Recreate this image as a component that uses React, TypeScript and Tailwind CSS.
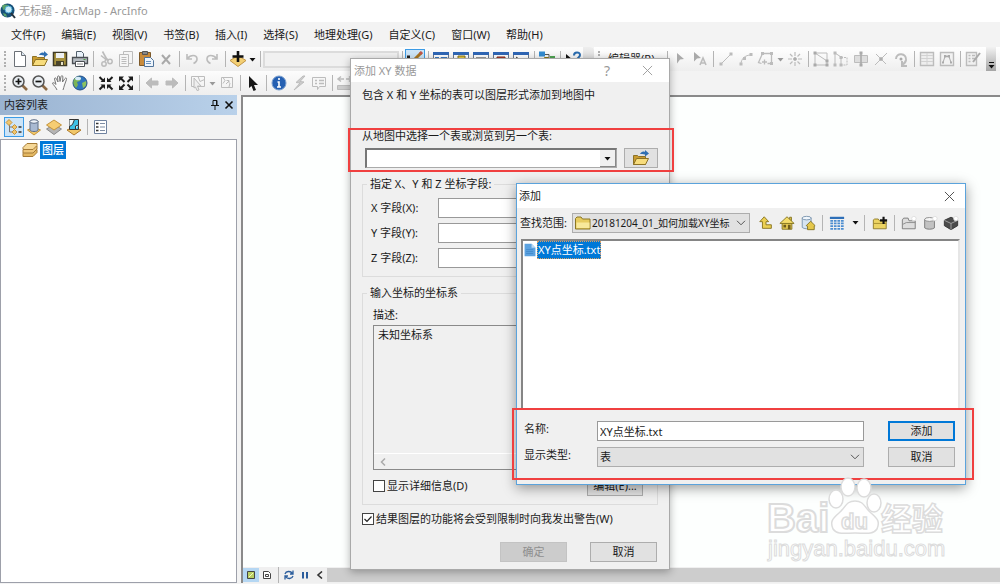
import clsx from 'clsx'
import type { ReactNode } from 'react'

const menus = [
  '文件(F)',
  '编辑(E)',
  '视图(V)',
  '书签(B)',
  '插入(I)',
  '选择(S)',
  '地理处理(G)',
  '自定义(C)',
  '窗口(W)',
  '帮助(H)',
]

function Svg({ children, gray }: { children: ReactNode; gray?: boolean }) {
  return (
    <svg
      viewBox="0 0 18 18"
      className={clsx('size-[18px] shrink-0', gray && 'text-[#bcbcbc]')}
      fill="none"
      stroke="currentColor"
      aria-hidden="true"
    >
      {children}
    </svg>
  )
}

/* Standard toolbar icons */
const NewDoc = () => (
  <Svg>
    <path d="M3.5 1.5h7l4 4v11h-11z" fill="#fff" stroke="#6b7076" />
    <path d="M10.500 1.500v4h4" fill="#dbe6f0" stroke="#6b7076" />
  </Svg>
)
const OpenFolder = () => (
  <Svg>
    <path d="M1.500 15.500v-9h4l1 1h7v8z" fill="#c99b2f" stroke="#8d7226" />
    <path d="M1.500 15.500l3-6h12l-3 6z" fill="#f7dc7c" stroke="#8d7226" />
    <path d="M8 5c1-2 3-3 5-2V1l4 3.500-4 3V5.500C11 5 9.500 5 8 5z" fill="#2f6fb2" stroke="none" />
  </Svg>
)
const Save = () => (
  <Svg>
    <path d="M2.500 2.500h13v13h-13z" fill="#a8923e" stroke="#3e3a26" strokeWidth="1.500" />
    <path d="M5 3h8v5H5z" fill="#eef1f3" stroke="none" />
    <path d="M5 11h8v4.500H5z" fill="#4a452c" stroke="none" />
    <path d="M10 12h2v3h-2z" fill="#e8e3c8" stroke="none" />
  </Svg>
)
const Print = () => (
  <Svg>
    <path d="M5.500 8V1.500h5l2 2V8" fill="#eaf2fa" stroke="#52606c" />
    <path d="M1.500 7.500h15v6h-15z" fill="#b6bcc2" stroke="#4b4f54" strokeWidth="1.300" />
    <path d="M4.500 11.500h9v5h-9z" fill="#fff" stroke="#4b4f54" />
    <path d="M6 14h6" stroke="#888" />
    <path d="M12.500 9.500h2" stroke="#4a9e43" />
  </Svg>
)
const Cut = () => (
  <Svg gray>
    <path d="M5.500 1.500l5 9M9 9.500l-5-4" strokeWidth="1.600" />
    <circle cx="7" cy="14" r="2.200" strokeWidth="1.500" />
    <circle cx="13" cy="11.500" r="2.200" strokeWidth="1.500" />
    <path d="M8 11.500l1-3 2.500 1.500" strokeWidth="1.500" />
  </Svg>
)
const Copy = () => (
  <Svg gray>
    <path d="M6.500 1.500h9v12h-9z" fill="#f5f5f5" />
    <path d="M2.500 4.500h9v12h-9z" fill="#f5f5f5" />
    <path d="M4.500 7.500h5M4.500 9.500h5M4.500 11.500h5M4.500 13.500h5" />
  </Svg>
)
const Paste = () => (
  <Svg>
    <path d="M2.500 2.500h11v13h-11z" fill="#c98b3b" stroke="#7d5a2a" />
    <path d="M5.500 1.500h5v3h-5z" fill="#888" stroke="#555" />
    <path d="M7.500 7.500h6l3 3v6h-9z" fill="#eef5fc" stroke="#52749b" />
    <path d="M9 11.500h5M9 13.500h5" stroke="#6b92bd" />
  </Svg>
)
const Delete = () => (
  <Svg>
    <path d="M5 5l8 9M13 5l-8 9" stroke="#a9a9a9" strokeWidth="2" />
  </Svg>
)
const Undo = () => (
  <Svg gray>
    <path d="M4 4v5h5M4.500 8.500c3-4 9-4 9.500 0 .2 2-1.500 4-3.500 5" strokeWidth="1.600" />
  </Svg>
)
const Redo = () => (
  <Svg gray>
    <path d="M14 4v5H9M13.500 8.500c-3-4-9-4-9.500 0-.2 2 1.500 4 3.500 5" strokeWidth="1.600" />
  </Svg>
)
const AddData = () => (
  <Svg>
    <path d="M1 10.500l8-5 8 5-8 6z" fill="#f3cf74" stroke="#c19445" />
    <path d="M9 1v11M3.500 6.500h11" stroke="#111" strokeWidth="2.600" />
  </Svg>
)
const EditPencil = () => (
  <Svg>
    <path d="M1 5.500h3v3H1z" fill="#222" stroke="none" />
    <path d="M4 8c2 4 5 3 6 1" stroke="#2c5d9c" />
    <path d="M8.500 9.500l7-7" stroke="#a87521" strokeWidth="3" />
    <path d="M14 4l2-2" stroke="#c0554b" strokeWidth="3" />
  </Svg>
)
const WindowIcon = ({ children }: { children?: ReactNode }) => (
  <Svg>
    <path d="M1.500 2.500h15v13h-15z" fill="#fff" stroke="#6c7a8e" />
    <path d="M1 2h16v3H1z" fill="#2f66b5" stroke="none" />
    {children}
  </Svg>
)
const ModelBuilder = () => (
  <Svg>
    <path d="M4 4.500h7v7" stroke="#555" />
    <path d="M1 1.500h6v5H1z" fill="#338bd0" stroke="none" />
    <path d="M6.500 7.500h4v4h-4z" fill="#dfc132" stroke="#8a7515" />
    <path d="M12 6h5v6h-5z" fill="#4ea351" stroke="none" />
  </Svg>
)
const WhatsThis = () => (
  <Svg>
    <path d="M2 4l7 6H5.500L2 13z" fill="#111" stroke="none" />
    <path d="M10 5.500c0-4 6-4 6-.5 0 2.500-3 2.500-3 5M13 12v2" stroke="#2b6cae" strokeWidth="2" />
  </Svg>
)

/* Tools toolbar icons */
const Zoom = ({ plus }: { plus?: boolean }) => (
  <Svg>
    <path d="M11.500 11.500l4.500 4.500" stroke="#8c6a45" strokeWidth="2.600" />
    <circle cx="7.500" cy="7.500" r="5.500" fill="#e9eef2" stroke="#545454" strokeWidth="1.500" />
    <path d={plus ? 'M4.500 7.500h6M7.500 4.500v6' : 'M4.500 7.500h6'} stroke="#111" strokeWidth="1.700" />
  </Svg>
)
const Pan = () => (
  <Svg>
    <path
      d="M6 16c-1-3-4-5-4.500-7 1-1 2.500.5 3.500 1.500L3.500 5c0-1.500 1.500-1.500 2 0L7 8 6.500 3c.2-1.500 1.800-1.500 2 0L9 7.500l1-5c.4-1.300 2-1 1.900.5L11.500 8 14 4.500c.8-1.200 2-.3 1.500 1L13.500 11c-.5 2-1 3-1.500 5"
      fill="#fbfbfb"
      stroke="#777"
    />
  </Svg>
)
const Globe = () => (
  <Svg>
    <circle cx="9" cy="9" r="7" fill="#2f74bd" stroke="#244f83" />
    <path d="M4 4c3-2 5-1 6 0l-1 3-3 1 1 3-2 3c-3-3-3.500-7-1-10z" fill="#7cb454" stroke="none" />
    <path d="M11 9l4-2c1 4-1 6-3 7z" fill="#8cc361" stroke="none" />
    <ellipse cx="7" cy="4.500" rx="3" ry="1.800" fill="#d7ecfa" stroke="none" />
  </Svg>
)
const FixedZoomIn = () => (
  <Svg>
    <path d="M2.500 3l4 4M15.500 3l-4 4M2.500 15.500l4-4M15.500 15.500l-4-4" stroke="#1c1c1c" strokeWidth="2" />
    <path
      d="M8 8H3.500L8 3.500zM10 8h4.500L10 3.500zM8 10.500H3.500L8 15zM10 10.500h4.500L10 15z"
      fill="#1c1c1c"
      stroke="none"
    />
  </Svg>
)
const FixedZoomOut = () => (
  <Svg>
    <path d="M3.500 4l4 4M14.500 4l-4 4M3.500 14.500l4-4M14.500 14.500l-4-4" stroke="#1c1c1c" strokeWidth="2" />
    <path
      d="M2 2.500h5l-5 5zM16 2.500h-5l5 5zM2 16h5l-5-5zM16 16h-5l5-5z"
      fill="#1c1c1c"
      stroke="none"
    />
  </Svg>
)
const Arrow = ({ right }: { right?: boolean }) => (
  <Svg gray>
    <path
      d={right ? 'M15 9l-5.500-5V7H3v4h6.500v3z' : 'M3 9l5.500-5V7H15v4H8.500v3z'}
      fill="currentColor"
    />
  </Svg>
)
const SelectFeatures = () => (
  <Svg gray>
    <path d="M2.500 2.500h13v10h-13zM9 2.500l2 5 4.500-2" />
    <path d="M5 4l7 8H8.500l1.500 4-2 .5L6.500 13 5 14z" fill="#efefef" />
  </Svg>
)
const ClearSelection = () => (
  <Svg gray>
    <path d="M3.500 3.500h11v10h-11zM5 3.500l2 3-2 3M8 10l3-3M8.500 6.500H11V9M11 13l1-4" />
  </Svg>
)
const Pointer = () => (
  <Svg>
    <path d="M5 2l9 9h-4l2 5-2.500 1-2-5L5 14z" fill="#161616" stroke="none" />
  </Svg>
)
const Identify = () => (
  <Svg>
    <circle cx="9" cy="9" r="7" fill="#2560b2" stroke="#7b9fce" />
    <path d="M9 4v2M7.500 8H9v5M7 13h4" stroke="#fff" strokeWidth="1.600" />
  </Svg>
)
const Hyperlink = () => (
  <Svg gray>
    <path d="M13 2L6 8.500l4 .5-6 7 10-8-4-.500 5-5.500z" fill="#ccc" />
  </Svg>
)
const Popup = () => (
  <Svg gray>
    <path d="M2.500 3.500h13v9h-6l-2 3v-3h-5z" fill="#f6f6f6" />
    <path d="M5 6.500h2M9 6.500h5M5 9.500h2M9 9.500h5" strokeWidth="1.400" />
  </Svg>
)
const Measure = () => (
  <Svg gray>
    <path d="M2 5h6M5 2.500L2 5l3 2.500M16 5h-6M13 2.500L16 5l-3 2.500" strokeWidth="1.500" />
    <path d="M1.500 11.500h15v4h-15z" fill="#ccc" />
  </Svg>
)

/* Editor toolbar icons */
const EditArrow = ({ letter }: { letter?: boolean }) => (
  <Svg gray>
    <path d={letter ? 'M3 2l7 6-4 .5-3 3z' : 'M6 3l7 6-4 .5-3 4z'} fill="#aaa" stroke="none" />
    {letter && <path d="M9 15l3-7 3 7M10 13h4" strokeWidth="1.600" />}
  </Svg>
)
const Segment = () => (
  <Svg gray>
    <path d="M4 14L14 4" />
    <path d="M2.500 12.500h3v3h-3zM12.500 2.500h3v3h-3z" fill="currentColor" stroke="none" />
  </Svg>
)
const ArcSegment = () => (
  <Svg gray>
    <path d="M4 14c0-5 4-9 10-9" />
    <path d="M2.500 12.500h3v3h-3zM12.500 3h3v3h-3zM6 7h3v3H6z" fill="currentColor" stroke="none" />
  </Svg>
)
const Trace = () => (
  <Svg gray>
    <path d="M5.500 3.500h9v10h-4M5.500 3.500l-4 9 3 1M5 12h5M7.500 9.500v5" strokeWidth="1.300" />
    <path d="M4 2h3v3H4zM13 2h3v3h-3zM13 12h3v3h-3z" fill="currentColor" stroke="none" />
  </Svg>
)
const PointTool = () => (
  <Svg gray>
    <path d="M9 2v4M9 12v4M2 9h4M12 9h4M4 4l2.500 2.500M14 4l-2.500 2.500M4 14l2.500-2.500M14 14l-2.500-2.500" strokeWidth="1.200" />
    <circle cx="9" cy="9" r="1.500" fill="#aaa" />
  </Svg>
)
const EditVertices = () => (
  <Svg gray>
    <path d="M3 3v12h12v-4L3 3h12v8" />
    <path d="M1.500 1.500h3v3h-3zM1.500 13.500h3v3h-3zM13.500 13.500h3v3h-3zM13.500 9.500h3v3h-3z" fill="#aaa" stroke="none" />
  </Svg>
)
const Reshape = () => (
  <Svg gray>
    <path d="M3 15V3l6 4v8" />
    <path d="M9 7.500h6V15H9" strokeDasharray="2 1" />
    <path d="M1.500 1.500h3v3h-3zM1.500 13.500h3v3h-3zM7.500 6h3v3h-3zM7.500 13.500h3v3h-3z" fill="#bbb" stroke="none" />
  </Svg>
)
const CutPolygon = () => (
  <Svg gray>
    <path d="M2.500 5.500h13v7h-13z" fill="#ddd" />
    <path d="M9 3v12" stroke="#aaa" strokeWidth="1.600" />
    <path d="M7.500 1.500h3v3h-3zM7.500 13.500h3v3h-3z" fill="#aaa" stroke="none" />
  </Svg>
)
const SplitTool = () => (
  <Svg gray>
    <path d="M3 15L15 3M4 4l10 10" />
    <circle cx="9" cy="9" r="1.500" fill="#aaa" />
  </Svg>
)
const RotateTool = () => (
  <Svg gray>
    <path d="M4 9c0-7 11-6 10 1-.5 3-2.500 4-4 4.500M10 11v5h5" strokeWidth="2" />
    <circle cx="9" cy="9" r="1.500" fill="#aaa" stroke="none" />
  </Svg>
)
const Attributes = () => (
  <Svg gray>
    <path d="M2.500 2.500h13v13h-13z" fill="#eee" strokeWidth="1.400" />
    <path d="M3 5.500h12M3 8.500h12M3 11.500h12M9 3v12" stroke="#d2d2d2" />
  </Svg>
)
const SketchProps = () => (
  <Svg gray>
    <path d="M2.500 2.500h13v13h-13z" fill="#f2f2f2" strokeWidth="1.400" />
    <path d="M5 12.500l2-6h4l2 6" stroke="#aaa" />
    <path d="M6 5h2.500v2.500H6zM9.500 5H12v2.500H9.500zM4 11.500h2v2H4zM12 11.500h2v2h-2z" fill="#aaa" stroke="none" />
  </Svg>
)
const CreateFeatures = () => (
  <Svg gray>
    <path d="M2.500 2.500h10v13h-10z" fill="#f0f0f0" strokeWidth="1.400" />
    <path d="M4.500 5.500h2M4.500 8.500h2M4.500 11.500h2M8 5.500h3M8 8.500h3" strokeWidth="1.500" />
    <path d="M9 12l7-9" stroke="#aaa" strokeWidth="2" />
  </Svg>
)

/* Table of contents icons */
const ByDrawingOrder = () => (
  <Svg>
    <path d="M4.500 6v8h5M4.500 9h5" stroke="#777" />
    <path d="M1 4.500l3-3 3 3-3 3zM7 9l2.500-2.500L12 9l-2.500 2.500zM7 14l2.500-2.500L12 14l-2.500 2.500z" fill="#efc66e" stroke="#c5943c" />
    <path d="M13.500 9h3M13.500 14h3" stroke="#333" strokeWidth="1.600" />
  </Svg>
)
const BySource = () => (
  <Svg>
    <path d="M2.500 12l6.500-3 6.500 3-6.500 5z" fill="#f1c769" stroke="#c5943c" />
    <path d="M5 3v9c0 2 8 2 8 0V3z" fill="#a9b9d2" stroke="#5e6e88" />
    <ellipse cx="9" cy="3.500" rx="4" ry="1.800" fill="#f0f4fa" stroke="#5e6e88" />
  </Svg>
)
const ByVisibility = () => (
  <Svg>
    <path d="M1.500 11L9 6.500l7.500 4.500L9 16.500z" fill="#b5b5b5" stroke="#8a8a8a" />
    <path d="M1.500 7L9 2l7.500 5L9 12z" fill="#f6cd73" stroke="#c5943c" />
  </Svg>
)
const BySelection = () => (
  <Svg>
    <path d="M2 12l7-3 7 3-7 5z" fill="#f1c769" stroke="#b07b2a" />
    <path d="M4.500 1.500h9v10h-9z" fill="#3dc1e6" stroke="#333" />
    <path d="M4.500 1.500h5l-2 5-3 2M13.500 7l-3 1v3.500" fill="#eaf8fc" stroke="#333" />
  </Svg>
)
const ListOptions = () => (
  <Svg>
    <path d="M3.500 2.500h12v13h-12z" fill="#fff" stroke="#7083a0" />
    <path d="M5 5.500h2.500M5 9h2.500M5 12.500h2.500" stroke="#333" strokeWidth="1.500" />
    <path d="M9 5.500h5M9 9h5M9 12.500h5" stroke="#7d8ca3" />
  </Svg>
)
const Layers = () => (
  <Svg>
    <path d="M2 15.500v-3l4-4h10v3l-4 4z" fill="#e4b862" stroke="#a57b36" />
    <path d="M2 12v-3l4-4h10v3l-4 4z" fill="#eec77c" stroke="#a57b36" />
    <path d="M2 8.500v-2l4-4h10v2l-4 4z" fill="#f6d897" stroke="#a57b36" />
  </Svg>
)

/* File browser icons */
const UpLevel = () => (
  <Svg>
    <path d="M7 2L2 7.500h3V15h10v-4H9V7.500h3z" fill="#ecd053" stroke="#84701a" />
  </Svg>
)
const Home = () => (
  <Svg>
    <path d="M12 2.500h2v4h-2zM3.500 9h11v7h-11z" fill="#e7cb52" stroke="#80701f" />
    <path d="M1 9.500l8-7.500 8 7.500z" fill="#f4dc69" stroke="#80701f" />
    <path d="M5 11h3v3H5zM10 11h3v5h-3z" fill="#6d5a1a" stroke="none" />
  </Svg>
)
const DefaultGdb = () => (
  <Svg>
    <path d="M2.500 3v11c2 2 8 2 10 0V3z" fill="#d6e4f1" stroke="#7791ab" />
    <ellipse cx="7.500" cy="3.500" rx="5" ry="2" fill="#f1f7fd" stroke="#7791ab" />
    <path d="M7 12l5-5 5 5-1 .5v4H8.500v-4z" fill="#e5c74b" stroke="#80701f" />
  </Svg>
)
const DetailsGrid = () => (
  <Svg>
    <path d="M1 2h16v2.500H1z" fill="#2e6fb8" stroke="none" />
    <path d="M1.500 6.500h15M1.500 9.500h15M1.500 12.500h15M1.500 15.500h15" stroke="#4c8dd0" strokeWidth="2" strokeDasharray="3 1" />
  </Svg>
)
const ConnectFolder = () => (
  <Svg>
    <path d="M1.500 15.500v-10l1.500-1h4l1.500 2H16v9z" fill="#ecd462" stroke="#8a7625" />
    <path d="M2 9.500h14" stroke="#a38b2c" />
    <path d="M13 2v8M9 6h8" stroke="#111" strokeWidth="2.400" />
  </Svg>
)
const NewFolder = () => (
  <Svg>
    <path d="M1.500 15.500v-10l1.500-2h5l1 3h7v9z" fill="#ddd" stroke="#777" />
    <path d="M2 10.500l4-2h10" stroke="#888" />
    <circle cx="14.500" cy="4" r="2.500" fill="#fff" stroke="#ddd" />
  </Svg>
)
const NewGdb = () => (
  <Svg>
    <path d="M3 5v9.500c2 2 9 2 11 0V5z" fill="#c2c2c2" stroke="#777" />
    <ellipse cx="8.500" cy="5" rx="5.500" ry="2.200" fill="#f5f5f5" stroke="#888" />
    <circle cx="14.500" cy="4" r="2.500" fill="#fff" stroke="#ddd" />
  </Svg>
)
const NewToolbox = () => (
  <Svg>
    <path d="M1.500 6L9 2.500 16.500 6v6L9 16.500 1.500 12z" fill="#4b4b4b" stroke="#333" />
    <path d="M1.500 6L9 9.500 16.500 6M9 9.500v7" stroke="#aaa" />
    <circle cx="14.500" cy="4" r="2.500" fill="#fff" stroke="#ddd" />
  </Svg>
)
const FolderIcon = () => (
  <Svg>
    <path d="M1.500 15V4.500L3 3h4l1.500 2H16v10z" fill="#e7cc60" stroke="#8a7625" />
    <path d="M2.500 8.500h13V14h-13z" fill="#f8e99b" stroke="none" />
  </Svg>
)
const TextFile = () => (
  <Svg>
    <path d="M2 1h9l5 5v11H2z" fill="#5ba2e0" stroke="none" />
    <path d="M11 1v5h5" fill="#b9d9f5" stroke="none" />
    <path d="M4 8.500h9M4 11h9M4 13.500h9" stroke="#3f86c8" />
  </Svg>
)

/* Small shared pieces */
function Tool({ label, children, active }: { label: string; children: ReactNode; active?: boolean }) {
  return (
    <button
      aria-label={label}
      className={clsx(
        'flex size-5 shrink-0 items-center justify-center',
        active && 'border border-[#3c9be5] bg-[#cce4f7]',
      )}
    >
      {children}
    </button>
  )
}
const Sep = () => (
  <div className="flex h-4 w-1.5 shrink-0 justify-center">
    <div className="w-px bg-[#b4b4b4]" />
  </div>
)
const Grip = () => <div className="mx-1 h-4 w-px shrink-0 border-l-2 border-dotted border-[#b0b0b0]" />

function Caret({ gray }: { gray?: boolean }) {
  return (
    <svg viewBox="0 0 9 5" className={clsx('h-[5px] w-[9px] shrink-0', gray ? 'text-[#999]' : 'text-[#111]')}>
      <path d="M1.500 1h6l-3 3.500z" fill="currentColor" />
    </svg>
  )
}
function Chevron() {
  return (
    <svg viewBox="0 0 10 6" className="pointer-events-none h-1.5 w-2.5" fill="none" stroke="#555">
      <path d="M1 .8l4 4 4-4" />
    </svg>
  )
}
function Cross({ className }: { className?: string }) {
  return (
    <svg viewBox="0 0 12 12" className={clsx('size-[11px]', className)} fill="none" stroke="currentColor">
      <path d="M1 1l10 10M11 1L1 11" />
    </svg>
  )
}

const dialogButton =
  'flex h-5 w-[67px] items-center justify-center border border-[#adadad] bg-[#e1e1e1] leading-4'

function StandardToolbar() {
  return (
    <div className="flex h-6 items-center">
      <div className="flex h-6 w-[594px] shrink-0 items-center overflow-hidden rounded-r bg-linear-to-b from-[#fcfcfc] to-[#eee]">
        <Grip />
        <Tool label="新建"><NewDoc /></Tool>
        <Tool label="打开"><OpenFolder /></Tool>
        <Tool label="保存"><Save /></Tool>
        <Tool label="打印"><Print /></Tool>
        <Sep />
        <Tool label="剪切"><Cut /></Tool>
        <Tool label="复制"><Copy /></Tool>
        <Tool label="粘贴"><Paste /></Tool>
        <Tool label="删除"><Delete /></Tool>
        <Sep />
        <Tool label="撤消"><Undo /></Tool>
        <Tool label="恢复"><Redo /></Tool>
        <Sep />
        <Tool label="添加数据"><AddData /></Tool>
        <Caret />
        <Sep />
        <select aria-label="比例" disabled className="h-[17px] w-[136px] shrink-0 appearance-none border-2 border-[#dcdcdc] bg-[#f1f1f1]" />
        <Sep />
        <Tool label="编辑器工具条" active><EditPencil /></Tool>
        <Sep />
        <Tool label="内容列表"><WindowIcon><path d="M3 7.500h4M3 10h4M9 7.500h6v5H9z" stroke="#3d79c1" /></WindowIcon></Tool>
        <Tool label="目录"><WindowIcon><path d="M6 6h7v6H6z" fill="#e9c93d" stroke="#80701f" /></WindowIcon></Tool>
        <Tool label="搜索"><WindowIcon><path d="M4 7.500h10M4 10h10" stroke="#999" /></WindowIcon></Tool>
        <Tool label="工具箱"><WindowIcon><path d="M5 7h8v5H5z" fill="#c9432f" stroke="#7d2a1e" /></WindowIcon></Tool>
        <Tool label="Python"><WindowIcon><path d="M4 7l3 2-3 2" stroke="#333" /></WindowIcon></Tool>
        <Sep />
        <Tool label="模型构建器"><ModelBuilder /></Tool>
        <Sep />
        <Tool label="这是什么"><WhatsThis /></Tool>
        <div className="h-6 flex-1 bg-linear-to-b from-[#eee] to-[#c8c8c8]" />
      </div>
      <div className="flex h-6 min-w-0 flex-1 items-center bg-linear-to-b from-white to-[#eee]">
        <Grip />
        <button className="ml-1 flex shrink-0 items-center gap-px whitespace-nowrap">
          编辑器(R)
          <Caret />
        </button>
        <Sep />
        <Tool label="编辑工具"><EditArrow /></Tool>
        <Tool label="注记编辑"><EditArrow letter /></Tool>
        <Sep />
        <Tool label="直线段"><Segment /></Tool>
        <Tool label="弧段"><ArcSegment /></Tool>
        <Tool label="追踪"><Trace /></Tool>
        <Caret gray />
        <Tool label="点"><PointTool /></Tool>
        <Sep />
        <Tool label="编辑折点"><EditVertices /></Tool>
        <Tool label="整形"><Reshape /></Tool>
        <Tool label="裁剪面"><CutPolygon /></Tool>
        <Tool label="分割"><SplitTool /></Tool>
        <Tool label="旋转"><RotateTool /></Tool>
        <Sep />
        <Tool label="属性"><Attributes /></Tool>
        <Tool label="草图属性"><SketchProps /></Tool>
        <Sep />
        <Tool label="创建要素"><CreateFeatures /></Tool>
        <button
          aria-label="工具条选项"
          className="mr-1 ml-auto flex h-6 w-2.5 shrink-0 items-end justify-center bg-linear-to-b from-[#f2f2f2] to-[#a5a5a5] pb-0.5"
        >
          <svg viewBox="0 0 9 7" className="h-[7px] w-[9px]">
            <path d="M2 0h5v1H2zM1.500 3h6l-3 3.500z" fill="#111" />
          </svg>
        </button>
      </div>
    </div>
  )
}

function ToolsToolbar() {
  return (
    <div className="flex h-6 w-[360px] items-center bg-linear-to-b from-[#fcfcfc] to-[#eee]">
      <Grip />
      <Tool label="放大"><Zoom plus /></Tool>
      <Tool label="缩小"><Zoom /></Tool>
      <Tool label="平移"><Pan /></Tool>
      <Tool label="全图"><Globe /></Tool>
      <Sep />
      <Tool label="固定比例放大"><FixedZoomIn /></Tool>
      <Tool label="固定比例缩小"><FixedZoomOut /></Tool>
      <Sep />
      <Tool label="上一视图"><Arrow /></Tool>
      <Tool label="下一视图"><Arrow right /></Tool>
      <Sep />
      <Tool label="选择要素"><SelectFeatures /></Tool>
      <Caret gray />
      <Tool label="清除所选要素"><ClearSelection /></Tool>
      <Sep />
      <Tool label="选择元素"><Pointer /></Tool>
      <Sep />
      <Tool label="识别"><Identify /></Tool>
      <Tool label="超链接"><Hyperlink /></Tool>
      <Tool label="HTML 弹出窗口"><Popup /></Tool>
      <Sep />
      <Tool label="测量"><Measure /></Tool>
    </div>
  )
}

function ContentsPanel() {
  return (
    <aside className="flex w-[237px] shrink-0 flex-col">
      <div className="flex h-5 items-center bg-linear-to-r from-[#9ab3d1] to-[#b9d1ea] pr-px pl-1">
        <h2 className="flex-1">内容列表</h2>
        <button aria-label="自动隐藏" className="flex size-3.5 items-center justify-center">
          <svg viewBox="0 0 10 10" className="size-2.5" fill="none" stroke="#111">
            <path d="M3 .5h4v5H3zM1 5.500h8M5 6v4" />
            <path d="M6.500 1v4.500" />
          </svg>
        </button>
        <button aria-label="关闭" className="flex size-3.5 items-center justify-center">
          <svg viewBox="0 0 10 10" className="size-2.5" stroke="#111" strokeWidth="1.600">
            <path d="M1.500 1.500l7 7M8.500 1.500l-7 7" />
          </svg>
        </button>
      </div>
      <div className="flex h-6 items-center pl-1">
        <Tool label="按绘制顺序列出" active><ByDrawingOrder /></Tool>
        <Tool label="按源列出"><BySource /></Tool>
        <Tool label="按可见性列出"><ByVisibility /></Tool>
        <Tool label="按选择列出"><BySelection /></Tool>
        <Sep />
        <Tool label="选项"><ListOptions /></Tool>
      </div>
      <div className="flex-1 border border-[#9da0aa] bg-white pt-px">
        <div className="flex items-center gap-px pl-5">
          <Layers />
          <span className="bg-[#0078d7] px-0.5 py-px leading-4 font-medium text-white">图层</span>
        </div>
      </div>
    </aside>
  )
}

function MapView() {
  return (
    <main className="flex min-w-0 flex-1 flex-col border-t-2 border-l-2 border-[#8a8a8a]">
      <div className="flex-1 bg-[#fdfffe]" />
      <div className="flex h-4 items-center bg-[#f0f0f0]">
        <button aria-label="数据视图" className="flex h-3.5 w-4 items-center justify-center bg-[#b5d7f3]">
          <svg viewBox="0 0 8 8" className="size-2">
            <path d="M.5.5h7v7h-7z" fill="#b9cf62" stroke="#444" />
            <path d="M2 6l4-4" stroke="#f6f6c0" />
          </svg>
        </button>
        <button aria-label="布局视图" className="flex w-4 justify-center">
          <svg viewBox="0 0 8 8" className="size-2" fill="#fff" stroke="#444">
            <path d="M.5.5h5l2 2v5h-7zM2.500 3.500h3v2h-3z" />
          </svg>
        </button>
        <Sep />
        <button aria-label="刷新" className="flex w-4 justify-center">
          <svg viewBox="0 0 10 10" className="size-2.5" fill="none" stroke="#2b5d9c" strokeWidth="1.300">
            <path d="M1 4C2 1 6.500 .5 8.500 3.500M9 .5v3.500H6M9 6C8 9 3.500 9.500 1.500 6.500M1 9.500V6h3" />
          </svg>
        </button>
        <button aria-label="暂停绘制" className="flex w-4 justify-center">
          <svg viewBox="0 0 8 8" className="size-2" fill="#2b5d9c">
            <path d="M1 1h2v6.500H1zM5 1h2v6.500H5z" />
          </svg>
        </button>
        <button aria-label="向左滚动" className="flex w-3.5 justify-center">
          <svg viewBox="0 0 8 8" className="size-2" fill="none" stroke="#333" strokeWidth="1.600">
            <path d="M6 .5L2 4l4 3.500" />
          </svg>
        </button>
        <div className="h-3.5 flex-1 bg-[#cdcdcd]" />
      </div>
    </main>
  )
}

function AddXYDialog() {
  return (
    <section
      role="dialog"
      aria-label="添加 XY 数据"
      className="absolute top-[58px] left-[350px] w-80 border border-[#a9a9a9] bg-[#f0f0f0] shadow-[0_2px_8px_rgba(0,0,0,0.3)]"
    >
      <header className="flex h-[23px] items-center bg-white pr-4 pl-[3px] text-[#999]">
        <h2 className="flex-1">添加 XY 数据</h2>
        <button aria-label="帮助" className="mr-8 text-sm">?</button>
        <button aria-label="关闭"><Cross /></button>
      </header>
      <div className="px-[11px] pt-[5px] pb-[7px]">
        <p>包含 X 和 Y 坐标的表可以图层形式添加到地图中</p>
        <label htmlFor="table" className="mt-[25px] block">从地图中选择一个表或浏览到另一个表:</label>
        <div className="mt-1 flex items-center gap-[7px] pl-[3px]">
          <div className="flex h-5 w-[252px] border border-t-2 border-l-2 border-[#aaa] border-t-[#777] border-l-[#777] bg-white">
            <input id="table" className="min-w-0 flex-1 outline-none" />
            <button aria-label="选择表" className="flex w-4 items-center justify-center border-r border-b border-[#888] bg-[#f0f0f0]">
              <Caret />
            </button>
          </div>
          <button aria-label="浏览" className="flex h-5 w-[34px] items-center justify-center border border-[#adadad] bg-[#e1e1e1]">
            <OpenFolder />
          </button>
        </div>
        <fieldset className="mt-2 border border-[#dcdcdc] px-2 pt-1.5 pb-2">
          <legend className="-ml-1 px-[3px]">指定 X、Y 和 Z 坐标字段:</legend>
          <div className="flex flex-col gap-[5px]">
            {['X', 'Y', 'Z'].map((axis) => (
              <div key={axis} className="flex h-5 items-center">
                <label htmlFor={`field-${axis}`} className="w-[67px]">{axis} 字段({axis}):</label>
                <input id={`field-${axis}`} className="h-5 min-w-0 flex-1 border border-[#999] bg-white" />
              </div>
            ))}
          </div>
        </fieldset>
        <fieldset className="mt-2 border border-[#dcdcdc] px-2.5 pt-1.5 pb-2">
          <legend className="-ml-1.5 px-[3px]">输入坐标的坐标系</legend>
          <label htmlFor="crs" className="block">描述:</label>
          <div className="mt-0.5 flex h-[145px] flex-col border border-[#8a8a8a]">
            <textarea id="crs" readOnly defaultValue="未知坐标系" className="min-h-0 flex-1 resize-none px-1 py-px outline-none" />
            <div className="flex h-4 items-center border-t border-white pl-1.5">
              <svg viewBox="0 0 6 8" className="h-2 w-1.5" fill="none" stroke="#aaa" strokeWidth="1.500">
                <path d="M5 .5L1.500 4 5 7.500" />
              </svg>
            </div>
          </div>
          <div className="mt-1.5 flex items-start justify-between pr-1">
            <label className="flex items-center gap-0.5 pt-0.5">
              <input type="checkbox" className="size-3 appearance-none border border-[#444] bg-white" />
              显示详细信息(D)
            </label>
            <button className="flex h-5 w-14 items-center justify-center border border-[#adadad] bg-[#e1e1e1]">编辑(E)...</button>
          </div>
        </fieldset>
        <label className="mt-1.5 flex items-center gap-0.5">
          <span className="grid">
            <input type="checkbox" defaultChecked className="col-start-1 row-start-1 size-3 appearance-none border border-[#444] bg-white" />
            <svg viewBox="0 0 12 12" className="pointer-events-none col-start-1 row-start-1 size-3" fill="none" stroke="#222" strokeWidth="1.200">
              <path d="M2.500 6l2.500 2.500 4.500-5" />
            </svg>
          </span>
          结果图层的功能将会受到限制时向我发出警告(W)
        </label>
        <div className="mt-[15px] flex justify-end gap-[23px] pr-px">
          <button disabled className="flex h-5 w-[67px] items-center justify-center border border-[#c3c3c3] bg-[#ccc] text-[#8f8f8f]">
            确定
          </button>
          <button className={dialogButton}>取消</button>
        </div>
      </div>
    </section>
  )
}

function BrowseDialog() {
  return (
    <section
      role="dialog"
      aria-label="添加"
      className="absolute top-[183px] left-[516px] w-[450px] border border-[#5ba3dc] bg-[#f0f0f0] shadow-[0_3px_12px_rgba(0,0,0,0.4)]"
    >
      <header className="flex h-6 items-center bg-white pr-2.5 pl-0.5">
        <h2 className="flex-1">添加</h2>
        <button aria-label="关闭"><Cross className="text-[#444]" /></button>
      </header>
      <div className="flex h-[29px] items-center pr-1 pl-[3px]">
        <label htmlFor="look-in" className="w-[52px]">查找范围:</label>
        <div className="flex h-5 w-[178px] items-center border border-[#adadad] bg-[#e1e1e1] pr-[3px] pl-px">
          <FolderIcon />
          <select id="look-in" className="h-[18px] min-w-0 flex-1 appearance-none overflow-hidden text-[10px] outline-none">
            <option>20181204_01_如何加载XY坐标</option>
          </select>
          <Chevron />
        </div>
        <div className="flex flex-1 items-center justify-between pl-1.5 [&_button>svg]:size-4">
          <div className="flex gap-px">
            <Tool label="向上一级"><UpLevel /></Tool>
            <Tool label="主目录"><Home /></Tool>
            <Tool label="默认地理数据库"><DefaultGdb /></Tool>
          </div>
          <Sep />
          <div className="flex items-center gap-1">
            <Tool label="视图"><DetailsGrid /></Tool>
            <Caret />
          </div>
          <Sep />
          <Tool label="连接到文件夹"><ConnectFolder /></Tool>
          <Sep />
          <div className="flex gap-px">
            <Tool label="新建文件夹"><NewFolder /></Tool>
            <Tool label="新建地理数据库"><NewGdb /></Tool>
            <Tool label="新建工具箱"><NewToolbox /></Tool>
          </div>
        </div>
      </div>
      <div className="mt-0.5 mr-[5px] ml-1 h-[171px] border-t-2 border-r-2 border-l-2 border-t-[#858585] border-r-[#e6e6e6] border-l-[#858585] bg-white">
        <button className="flex items-center [&>svg]:size-3.5">
          <TextFile />
          <span className="border border-dotted border-[#d9a066] bg-[#0078d7] leading-4 text-white">XY点坐标.txt</span>
        </button>
      </div>
      <div className="grid grid-cols-[73px_1fr_67px] items-center gap-y-1.5 pt-[11px] pr-2.5 pb-[17px] pl-[7px]">
        <label htmlFor="name" className="-mt-1">名称:</label>
        <input id="name" defaultValue="XY点坐标.txt" className="mr-6 h-5 border border-[#999] bg-white px-0.5" />
        <button className="flex h-5 items-center justify-center border-2 border-[#0078d7] bg-[#e1e1e1]">添加</button>
        <label htmlFor="kind" className="-mt-1">显示类型:</label>
        <div className="mr-6 flex h-5 items-center border border-[#adadad] bg-[#e1e1e1] pr-[3px]">
          <select id="kind" className="h-[18px] flex-1 appearance-none pl-0.5 outline-none">
            <option>表</option>
          </select>
          <Chevron />
        </div>
        <button className={dialogButton}>取消</button>
      </div>
    </section>
  )
}

function Watermark() {
  return (
    <svg
      viewBox="0 0 184 90"
      className="pointer-events-none absolute right-[50px] bottom-[18px] h-[90px] w-[184px]"
      fill="#fff"
      stroke="#dcdcdc"
      strokeWidth="1.500"
      fontFamily="'Liberation Sans', 'Noto Sans CJK SC', sans-serif"
    >
      <g fontWeight="700">
        <text x="1" y="56" fontSize="40" strokeWidth="2">Bai</text>
        <ellipse cx="70" cy="23" rx="7" ry="9" />
        <ellipse cx="82" cy="11" rx="7" ry="9" />
        <ellipse cx="98" cy="12" rx="7" ry="9" />
        <ellipse cx="108" cy="27" rx="7" ry="9" />
        <path d="M89 25c9 0 9 6 16 12 7 6 9 9 6 16-4 6-12 4-22 4s-18 2-22-4c-3-7-1-10 6-16 7-6 7-12 16-12z" />
        <text x="75" y="53" fontSize="22">du</text>
        <text x="115" y="54" fontSize="31">经验</text>
      </g>
      <text x="2" y="80" fontSize="22" strokeWidth="1">jingyan.baidu.com</text>
    </svg>
  )
}

export default function App() {
  return (
    <div className="relative flex min-h-screen flex-col overflow-hidden bg-[#f3f3f3] font-['Noto_Sans','Noto_Sans_CJK_SC',sans-serif] text-[11px] leading-4 text-[#1a1a1a]">
      {/* Title bar */}
      <header className="flex h-[22px] items-center gap-[3px] bg-white text-[#999]">
        <svg viewBox="0 0 16 16" className="size-4" fill="none">
          <circle cx="7.500" cy="7.500" r="7" fill="#174f78" />
          <path d="M2 3c3-3 6-1 7 0l-3 3-3 1zM3 10l3 1 1 3-3-1z" fill="#5aa36b" />
          <circle cx="8.500" cy="6.500" r="3.500" fill="#c6ebf7" stroke="#4aa8cf" />
          <path d="M11 10l4 5" stroke="#26333d" strokeWidth="2" />
        </svg>
        <h1>无标题 - ArcMap - ArcInfo</h1>
      </header>
      <nav className="flex h-[25px] items-center gap-4 pl-[11px]">
        {menus.map((menu) => (
          <button key={menu}>{menu}</button>
        ))}
      </nav>
      <StandardToolbar />
      <ToolsToolbar />
      <div className="flex flex-1 gap-1 pb-px">
        <ContentsPanel />
        <MapView />
      </div>

      <AddXYDialog />
      <div className="pointer-events-none absolute top-32 left-[348px] h-11 w-[326px] border-2 border-[#f04040]" />
      <BrowseDialog />
      <div className="pointer-events-none absolute top-[408px] left-[512px] h-[72px] w-[462px] border-2 border-[#f04040]" />
      <Watermark />
    </div>
  )
}
